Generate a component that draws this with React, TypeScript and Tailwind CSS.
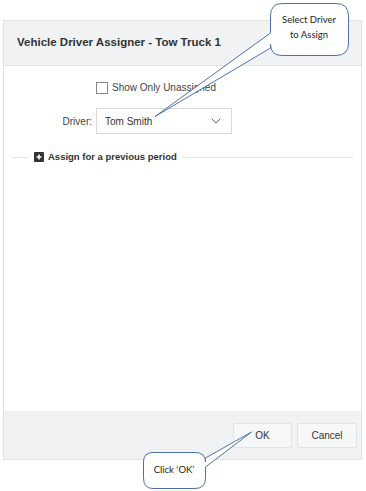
import { ChevronDown } from "lucide-react";

function Callouts() {
  return (
    <svg
      className="pointer-events-none absolute left-0 top-0"
      width={366}
      height={491}
      viewBox="0 0 366 491"
    >
      {/* Select Driver bubble */}
      <path
        d="M282 3.5 H336 Q348.5 3.5 348.5 16 V43 Q348.5 55.5 336 55.5 H282 Q270.5 55.5 270.5 44 L270.5 48 L155 116.5 L270.5 33 V16 Q270.5 3.5 282 3.5 Z"
        fill="#fff"
        stroke="#4d72a8"
        strokeWidth={1}
      />
      <text x={309} y={23} textAnchor="middle" fontSize={9.5} fill="#222" fontFamily="Lato, 'Open Sans', sans-serif">
        Select Driver
      </text>
      <text x={309} y={38} textAnchor="middle" fontSize={9.5} fill="#222" fontFamily="Lato, 'Open Sans', sans-serif">
        to Assign
      </text>
      {/* Click OK bubble */}
      <path
        d="M153 452.5 H195 Q205.5 452.5 205.5 462 L205.5 458 L251.5 432 L205.5 467 V478 Q205.5 488.5 195 488.5 H153 Q143.5 488.5 143.5 478 V462 Q143.5 452.5 153 452.5 Z"
        fill="#fff"
        stroke="#4d72a8"
        strokeWidth={1}
      />
      <text x={174} y={473} textAnchor="middle" fontSize={9.5} fill="#222" fontFamily="Lato, 'Open Sans', sans-serif">
        Click ‘OK’
      </text>
    </svg>
  );
}

export default function App() {
  return (
    <div className="relative h-[491px] w-[366px] bg-white pl-[3px] pt-[20px] font-['Liberation_Sans',Arial,sans-serif] text-[#333]">
      <div className="flex h-[440px] w-[359px] flex-col border border-[#e2e3e5]">
        <div className="flex h-[45px] shrink-0 items-center border-b border-[#e2e3e5] bg-[#f1f2f4] px-[13px]">
          <span className="text-[11.5px] font-bold text-[#333]">
            Vehicle Driver Assigner - Tow Truck 1
          </span>
        </div>

        <div className="flex flex-1 flex-col bg-white">
          <div className="flex items-center pl-[92px] pt-[14px]">
            <span className="h-[12px] w-[12px] border border-[#888] bg-white" />
            <span className="ml-[4px] text-[10px] text-[#444]">
              Show Only Unassigned
            </span>
          </div>

          <div className="mt-[13px] flex items-center">
            <span className="w-[88px] text-right text-[10px] text-[#444]">
              Driver:
            </span>
            <div className="ml-[4px] flex h-[26px] w-[136px] items-center justify-between border border-[#d8d9db] bg-white pl-[8px] pr-[7px]">
              <span className="text-[10px] text-[#333]">Tom Smith</span>
              <ChevronDown className="h-[16px] w-[16px] text-[#555]" strokeWidth={1.4} />
            </div>
          </div>

          <div className="mt-[16px] flex items-center px-[8px]">
            <div className="h-px w-[16px] bg-[#e3e4e6]" />
            <span className="ml-[6px] flex h-[10px] w-[10px] items-center justify-center rounded-[1px] bg-[#333]">
              <svg width="8" height="8" viewBox="0 0 8 8">
                <path d="M4 1.5 V6.5 M1.5 4 H6.5" stroke="#fff" strokeWidth={1.6} />
              </svg>
            </span>
            <span className="ml-[4px] text-[9.5px] font-bold text-[#333]">
              Assign for a previous period
            </span>
            <div className="ml-[5px] h-px flex-1 bg-[#e3e4e6]" />
          </div>
        </div>

        <div className="flex h-[48px] shrink-0 items-center justify-end gap-[5px] bg-[#f1f2f4] pr-[4px]">
          <button className="h-[25px] w-[59px] rounded-[2px] border border-[#e2e3e5] bg-[#f6f7f8] text-[10px] text-[#333]">
            OK
          </button>
          <button className="h-[25px] w-[60px] rounded-[2px] border border-[#e2e3e5] bg-[#f6f7f8] text-[10px] text-[#333]">
            Cancel
          </button>
        </div>
      </div>
      <Callouts />
    </div>
  );
}
